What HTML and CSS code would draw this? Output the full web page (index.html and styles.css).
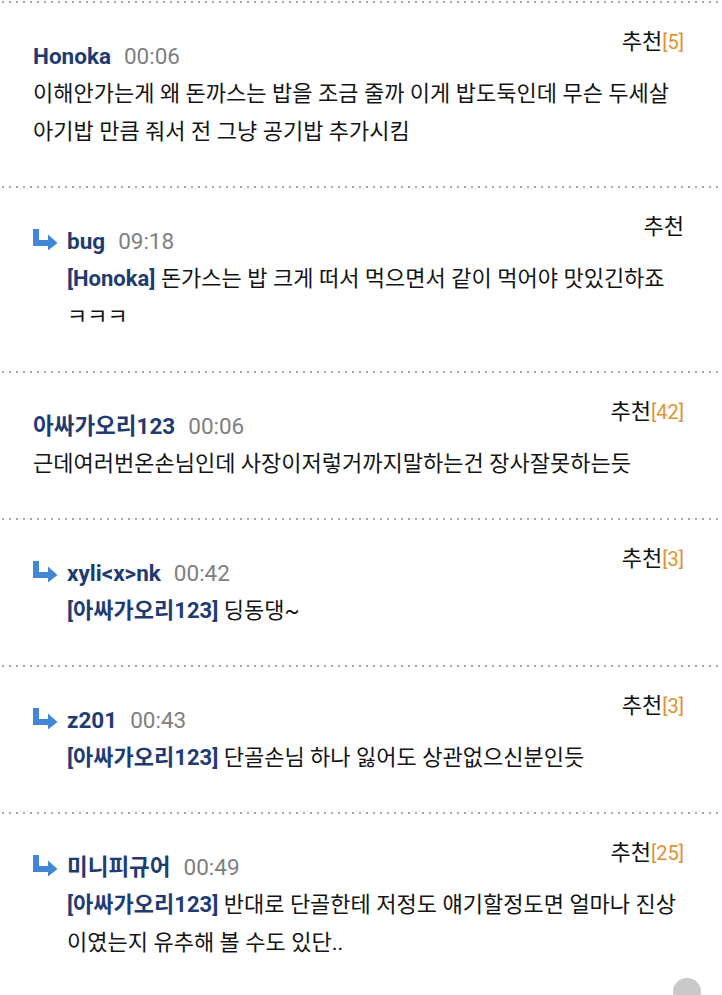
FILE: index.html
```html
<!DOCTYPE html>
<html lang="ko">
<head>
<meta charset="utf-8">
<title>댓글</title>
<link rel="stylesheet" href="styles.css">
</head>
<body>
<div class="cmt-list">
	<div class="cmt">
		<div class="cmt-top">
			<div class="cmt-head"><span class="name">Honoka</span><span class="time">00:06</span></div>
			<div class="rec">추천<span class="cnt">[5]</span></div>
		</div>
		<p class="txt">이해안가는게 왜 돈까스는 밥을 조금 줄까 이게 밥도둑인데 무슨 두세살 아기밥 만큼 줘서 전 그냥 공기밥 추가시킴</p>
	</div>
	<div class="cmt reply">
		<div class="cmt-top">
			<div class="cmt-head"><i class="re-ico"><svg width="25" height="21" viewBox="0 0 25 21"><path d="M0 0h6v11h9V5.5l9.5 8.5-9.5 7.5V17H0z" fill="#4287d6"/></svg></i><span class="name">bug</span><span class="time">09:18</span></div>
			<div class="rec">추천</div>
		</div>
		<p class="txt"><b class="to">[Honoka]</b> 돈가스는 밥 크게 떠서 먹으면서 같이 먹어야 맛있긴하죠 ㅋㅋㅋ</p>
	</div>
	<div class="cmt">
		<div class="cmt-top">
			<div class="cmt-head"><span class="name">아싸가오리123</span><span class="time">00:06</span></div>
			<div class="rec">추천<span class="cnt">[42]</span></div>
		</div>
		<p class="txt">근데여러번온손님인데 사장이저렇거까지말하는건 장사잘못하는듯</p>
	</div>
	<div class="cmt reply">
		<div class="cmt-top">
			<div class="cmt-head"><i class="re-ico"><svg width="25" height="21" viewBox="0 0 25 21"><path d="M0 0h6v11h9V5.5l9.5 8.5-9.5 7.5V17H0z" fill="#4287d6"/></svg></i><span class="name">xyli&lt;x&gt;nk</span><span class="time">00:42</span></div>
			<div class="rec">추천<span class="cnt">[3]</span></div>
		</div>
		<p class="txt"><b class="to">[아싸가오리123]</b> 딩동댕~</p>
	</div>
	<div class="cmt reply">
		<div class="cmt-top">
			<div class="cmt-head"><i class="re-ico"><svg width="25" height="21" viewBox="0 0 25 21"><path d="M0 0h6v11h9V5.5l9.5 8.5-9.5 7.5V17H0z" fill="#4287d6"/></svg></i><span class="name">z201</span><span class="time">00:43</span></div>
			<div class="rec">추천<span class="cnt">[3]</span></div>
		</div>
		<p class="txt"><b class="to">[아싸가오리123]</b> 단골손님 하나 잃어도 상관없으신분인듯</p>
	</div>
	<div class="cmt reply">
		<div class="cmt-top">
			<div class="cmt-head"><i class="re-ico"><svg width="25" height="21" viewBox="0 0 25 21"><path d="M0 0h6v11h9V5.5l9.5 8.5-9.5 7.5V17H0z" fill="#4287d6"/></svg></i><span class="name">미니피규어</span><span class="time">00:49</span></div>
			<div class="rec">추천<span class="cnt">[25]</span></div>
		</div>
		<p class="txt"><b class="to">[아싸가오리123]</b> 반대로 단골한테 저정도 얘기할정도면 얼마나 진상이였는지 유추해 볼 수도 있단..</p>
	</div>
</div>
<a class="go-top" href="#"></a>
</body>
</html>
```
FILE: styles.css
```css
body, p, div { margin: 0; padding: 0; }
body { background: #fff; font-family: Roboto, "Noto Sans CJK KR", sans-serif; font-size: 22px; color: #141414; }
a { text-decoration: none; }
.cmt-list { padding-top: 1px; }
.cmt { padding: 22px 38px 35px 33px; background: linear-gradient(to right, #a9a9a9 2px, transparent 2px) 2px 0 / 7px 2px repeat-x; }
.cmt-top { display: flex; justify-content: space-between; align-items: flex-start; }
.cmt-head { display: flex; align-items: center; margin-top: 14px; line-height: 38px; font-size: 22.5px; }
.rec { line-height: 38px; color: #111; }
.cnt { color: #e0922f; font-size: 20px; }
.name { font-weight: bold; color: #1f3c72; }
.time { color: #808080; margin-left: 13px; }
.txt { line-height: 38px; }
.to { color: #1f3c72; }
.reply .txt { padding-left: 34px; }
.re-ico { display: block; width: 25px; height: 21px; margin: -4px 9px 0 0; }
.re-ico svg { display: block; }
.go-top { position: fixed; left: 673px; top: 978px; width: 28px; height: 28px; border-radius: 50%; background: #c9c9c9; }
```
